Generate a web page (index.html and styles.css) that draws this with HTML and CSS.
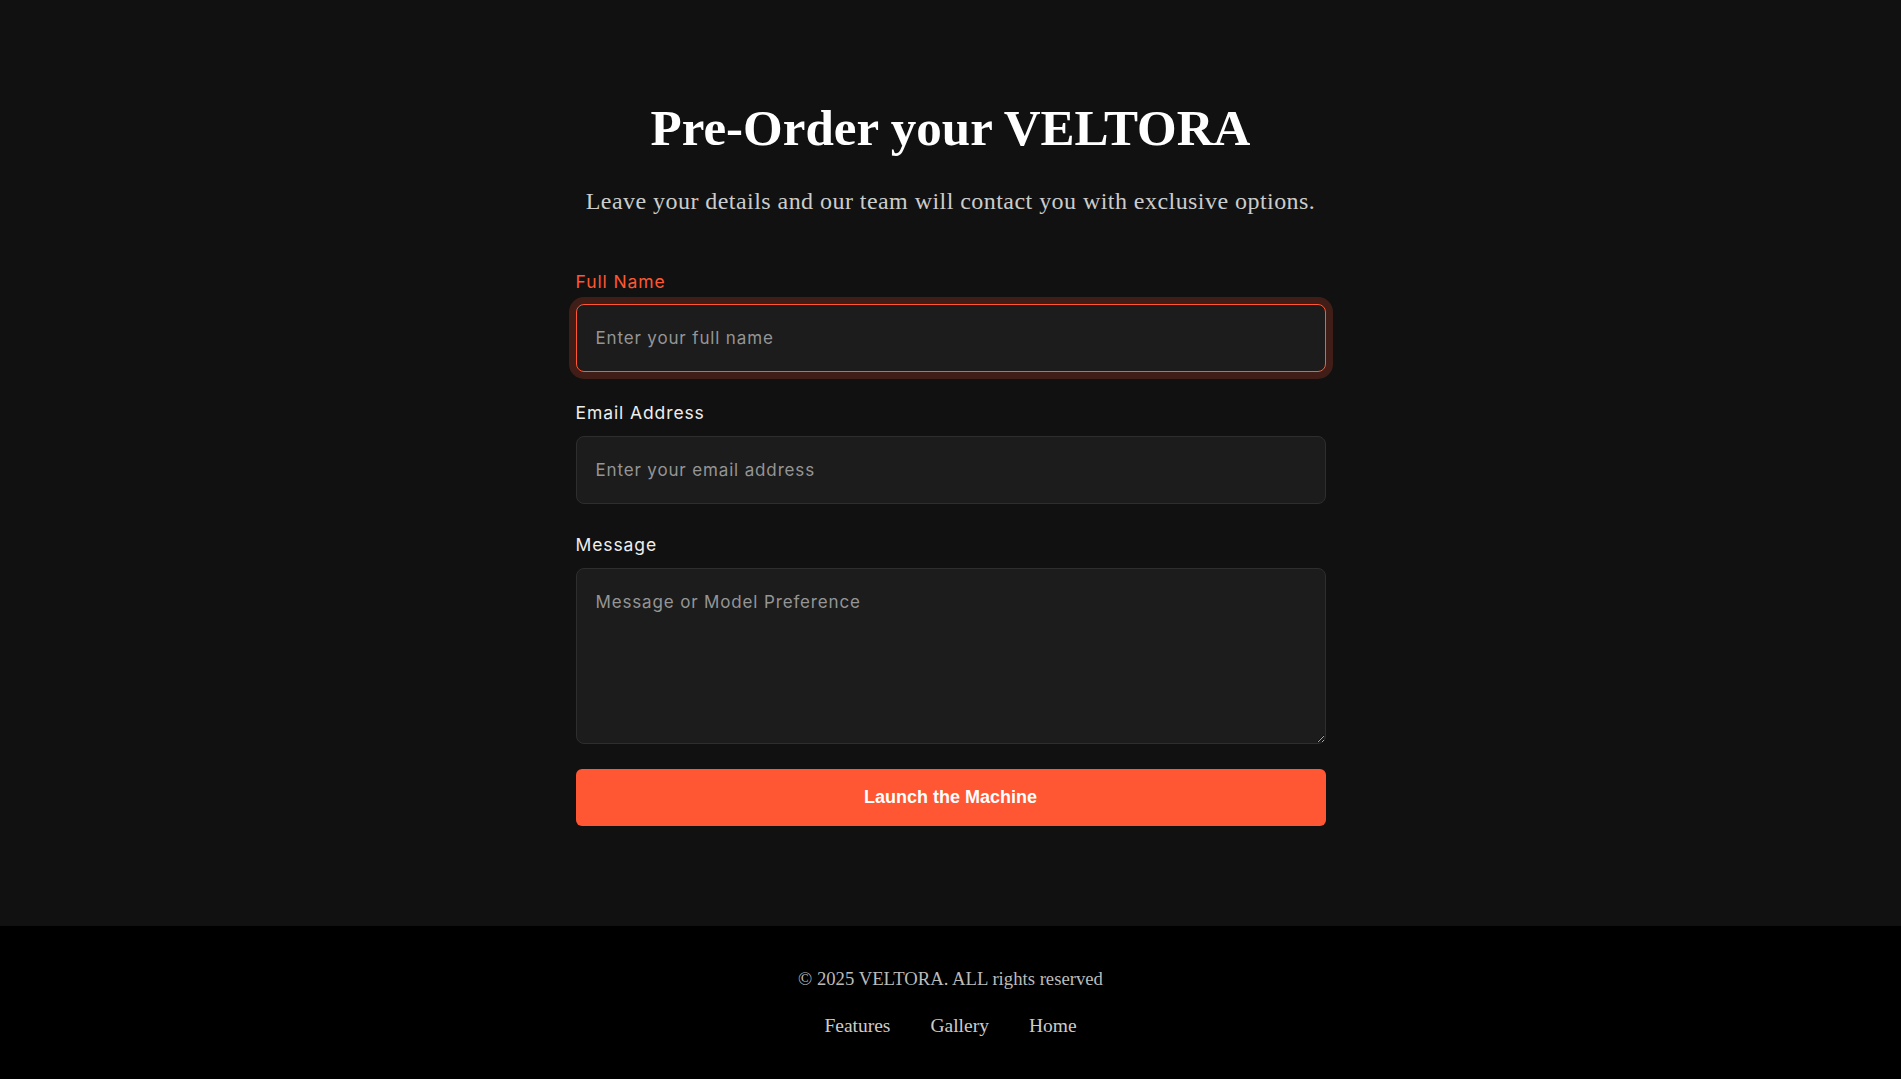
FILE: index.html
```html
<!DOCTYPE html>
<html lang="en">
<head>
<meta charset="utf-8">
<title>Pre-Order your VELTORA</title>
<link rel="stylesheet" href="styles.css">
</head>
<body>
<main class="preorder">
  <h1 class="title">Pre-Order your VELTORA</h1>
  <p class="subtitle">Leave your details and our team will contact you with exclusive options.</p>
  <form class="form">
    <div class="group is-focused">
      <label class="label" for="name">Full Name</label>
      <input class="field" id="name" type="text" placeholder="Enter your full name">
    </div>
    <div class="group">
      <label class="label" for="email">Email Address</label>
      <input class="field" id="email" type="email" placeholder="Enter your email address">
    </div>
    <div class="group">
      <label class="label" for="msg">Message</label>
      <textarea class="field area" id="msg" placeholder="Message or Model Preference"></textarea>
    </div>
    <button class="submit" type="button">Launch the Machine</button>
  </form>
</main>
<footer class="footer">
  <p class="copy">© 2025 VELTORA. ALL rights reserved</p>
  <nav class="links">
    <a href="#" class="link">Features</a>
    <a href="#" class="link">Gallery</a>
    <a href="#" class="link">Home</a>
  </nav>
</footer>
</body>
</html>
```

FILE: styles.css
```css
* { box-sizing: border-box; }

html, body {
  margin: 0;
  padding: 0;
  background: #111111;
}

body {
  font-family: "Inter", "Liberation Sans", sans-serif;
  color: #fff;
}

.preorder {
  background: #111111;
  padding: 98px 0 100px;
  display: flex;
  flex-direction: column;
  align-items: center;
}

.title {
  margin: 0;
  font-family: "Liberation Serif", serif;
  font-weight: 700;
  font-size: 51px;
  line-height: 60px;
  color: #ffffff;
  text-align: center;
}

.subtitle {
  margin: 27px 0 0;
  font-family: "Liberation Serif", serif;
  font-size: 24px;
  line-height: 32px;
  letter-spacing: 0.45px;
  color: #cccccc;
  text-align: center;
}

.form {
  width: 750px;
  margin-top: 53px;
  display: flex;
  flex-direction: column;
}

.group {
  display: flex;
  flex-direction: column;
  margin-bottom: 30px;
}

.group:last-of-type {
  margin-bottom: 25px;
}

.label {
  font-size: 17.5px;
  line-height: 24px;
  letter-spacing: 0.9px;
  color: #eeeeee;
  margin-bottom: 10px;
}

.group + .group .label {
  margin-top: -1px;
  margin-bottom: 11px;
}

.field {
  display: block;
  width: 100%;
  height: 68px;
  padding: 21px 19px;
  font-family: "Inter", "Liberation Sans", sans-serif;
  font-size: 17px;
  line-height: 24px;
  letter-spacing: 0.85px;
  color: #eeeeee;
  background: #1c1c1c;
  border: 1px solid #2e2e2e;
  border-radius: 8px;
  outline: none;
}

.field::placeholder {
  color: #959595;
}

.area {
  height: 176px;
  resize: vertical;
}

.is-focused .label {
  color: #ff5733;
}

.is-focused .field {
  border-color: #ff5733;
  box-shadow: 0 0 0 7px rgba(255, 87, 51, 0.2);
}

.submit {
  height: 57px;
  width: 100%;
  border: none;
  border-radius: 6px;
  background: #ff5733;
  color: #ffffff;
  font-family: "Liberation Sans", Arial, sans-serif;
  font-weight: 700;
  font-size: 18px;
  cursor: pointer;
}

.footer {
  background: #000000;
  padding: 39px 0 40px;
  text-align: center;
  font-family: "Liberation Serif", serif;
}

.copy {
  margin: 0;
  font-size: 18.7px;
  line-height: 28px;
  color: #bbbbbb;
}

.links {
  margin-top: 19px;
  display: flex;
  justify-content: center;
  gap: 40px;
}

.link {
  font-size: 19.5px;
  line-height: 28px;
  color: #cccccc;
  text-decoration: none;
}
```
